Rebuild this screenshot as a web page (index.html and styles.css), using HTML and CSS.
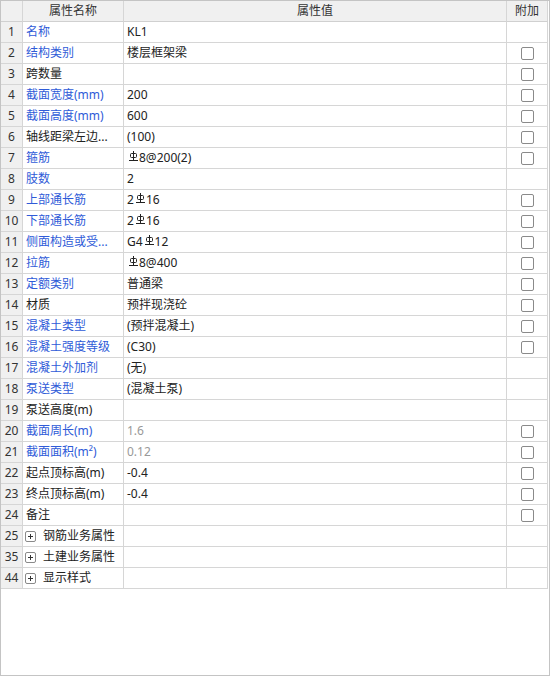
FILE: index.html
```html
<!DOCTYPE html>
<html lang="zh-CN">
<head>
<meta charset="utf-8">
<title>属性</title>
<link rel="stylesheet" href="styles.css">
</head>
<body>
<svg width="0" height="0" class="defs">
  <defs>
    <symbol id="rb" viewBox="0 0 9 10">
      <line x1="4.5" y1="0" x2="4.5" y2="9" stroke="currentColor" stroke-width="1"/>
      <rect x="1.5" y="2.5" width="6" height="4" rx="1" fill="none" stroke="currentColor" stroke-width="1"/>
      <line x1="0" y1="9.5" x2="9" y2="9.5" stroke="currentColor" stroke-width="1"/>
    </symbol>
  </defs>
</svg>
<div class="panel">
  <div class="grid">
    <div class="c num hd"></div>
    <div class="c hd ctr">属性名称</div>
    <div class="c hd ctr">属性值</div>
    <div class="c hd ctr">附加</div>

    <div class="c num">1</div><div class="c blue">名称</div><div class="c">KL1</div><div class="c chk"></div>
    <div class="c num">2</div><div class="c blue">结构类别</div><div class="c">楼层框架梁</div><div class="c chk"><span class="box"></span></div>
    <div class="c num">3</div><div class="c">跨数量</div><div class="c"></div><div class="c chk"><span class="box"></span></div>
    <div class="c num">4</div><div class="c blue">截面宽度(mm)</div><div class="c">200</div><div class="c chk"><span class="box"></span></div>
    <div class="c num">5</div><div class="c blue">截面高度(mm)</div><div class="c">600</div><div class="c chk"><span class="box"></span></div>
    <div class="c num">6</div><div class="c">轴线距梁左边...</div><div class="c">(100)</div><div class="c chk"><span class="box"></span></div>
    <div class="c num">7</div><div class="c blue">箍筋</div><div class="c"><svg class="rb lead"><use href="#rb"/></svg>8@200(2)</div><div class="c chk"><span class="box"></span></div>
    <div class="c num">8</div><div class="c blue">肢数</div><div class="c">2</div><div class="c chk"></div>
    <div class="c num">9</div><div class="c blue">上部通长筋</div><div class="c">2<svg class="rb"><use href="#rb"/></svg>16</div><div class="c chk"><span class="box"></span></div>
    <div class="c num">10</div><div class="c blue">下部通长筋</div><div class="c">2<svg class="rb"><use href="#rb"/></svg>16</div><div class="c chk"><span class="box"></span></div>
    <div class="c num">11</div><div class="c blue">侧面构造或受...</div><div class="c">G4<svg class="rb"><use href="#rb"/></svg>12</div><div class="c chk"><span class="box"></span></div>
    <div class="c num">12</div><div class="c blue">拉筋</div><div class="c"><svg class="rb lead"><use href="#rb"/></svg>8@400</div><div class="c chk"><span class="box"></span></div>
    <div class="c num">13</div><div class="c blue">定额类别</div><div class="c">普通梁</div><div class="c chk"><span class="box"></span></div>
    <div class="c num">14</div><div class="c">材质</div><div class="c">预拌现浇砼</div><div class="c chk"><span class="box"></span></div>
    <div class="c num">15</div><div class="c blue">混凝土类型</div><div class="c">(预拌混凝土)</div><div class="c chk"><span class="box"></span></div>
    <div class="c num">16</div><div class="c blue">混凝土强度等级</div><div class="c">(C30)</div><div class="c chk"><span class="box"></span></div>
    <div class="c num">17</div><div class="c blue">混凝土外加剂</div><div class="c">(无)</div><div class="c chk"></div>
    <div class="c num">18</div><div class="c blue">泵送类型</div><div class="c">(混凝土泵)</div><div class="c chk"></div>
    <div class="c num">19</div><div class="c">泵送高度(m)</div><div class="c"></div><div class="c chk"></div>
    <div class="c num">20</div><div class="c blue">截面周长(m)</div><div class="c grey">1.6</div><div class="c chk"><span class="box"></span></div>
    <div class="c num">21</div><div class="c blue">截面面积(m²)</div><div class="c grey">0.12</div><div class="c chk"><span class="box"></span></div>
    <div class="c num">22</div><div class="c">起点顶标高(m)</div><div class="c">-0.4</div><div class="c chk"><span class="box"></span></div>
    <div class="c num">23</div><div class="c">终点顶标高(m)</div><div class="c">-0.4</div><div class="c chk"><span class="box"></span></div>
    <div class="c num">24</div><div class="c">备注</div><div class="c"></div><div class="c chk"><span class="box"></span></div>
    <div class="c num">25</div><div class="c grp"><span class="plus"></span>钢筋业务属性</div><div class="c"></div><div class="c chk"></div>
    <div class="c num">35</div><div class="c grp"><span class="plus"></span>土建业务属性</div><div class="c"></div><div class="c chk"></div>
    <div class="c num">44</div><div class="c grp"><span class="plus"></span>显示样式</div><div class="c"></div><div class="c chk"></div>
  </div>
</div>
</body>
</html>
```

FILE: styles.css
```css
html, body {
  margin: 0;
  padding: 0;
  background: #ffffff;
}
.defs {
  position: absolute;
  width: 0;
  height: 0;
}
.panel {
  width: 550px;
  height: 676px;
  box-sizing: border-box;
  border: 1px solid #c4c4c4;
  background: #ffffff;
  font-family: "Noto Sans", "Noto Sans CJK SC", sans-serif;
  font-size: 12px;
  color: #222222;
}
.grid {
  display: grid;
  grid-template-columns: 22px 101px 383px 41px;
  grid-auto-rows: 21px;
  width: 547px;
}
.c {
  box-sizing: border-box;
  border-right: 1px solid #d6d6d6;
  border-bottom: 1px solid #d6d6d6;
  line-height: 20px;
  padding-left: 3px;
  white-space: nowrap;
  overflow: hidden;
  display: flex;
  align-items: center;
}
.hd {
  background: #f0f0f0;
  color: #333333;
  border-bottom-color: #d0d0d0;
}
.ctr {
  justify-content: center;
  padding-left: 0;
}
.num {
  background: #f0f0f0;
  color: #333333;
  justify-content: center;
  padding-left: 0;
}
.blue {
  color: #2f5bd8;
}
.grey {
  color: #999999;
}
.chk {
  justify-content: center;
  padding-left: 0;
}
.box {
  display: block;
  width: 13px;
  height: 13px;
  box-sizing: border-box;
  border: 1px solid #8a8a8a;
  border-radius: 2px;
  background: #ffffff;
}
.rb {
  width: 9px;
  height: 10px;
  color: #222222;
  margin: 0 1px 0 2px;
  position: relative;
  top: -2px;
  flex: none;
}
.rb.lead {
  margin-left: 2px;
}
.grp {
  padding-left: 2px;
}
.plus {
  position: relative;
  width: 11px;
  height: 11px;
  box-sizing: border-box;
  border: 1px solid #8a8a8a;
  border-radius: 2px;
  margin-right: 7px;
  flex: none;
}
.plus::before,
.plus::after {
  content: "";
  position: absolute;
  background: #333333;
}
.plus::before {
  left: 2px;
  top: 4px;
  width: 5px;
  height: 1px;
}
.plus::after {
  left: 4px;
  top: 2px;
  width: 1px;
  height: 5px;
}
```
